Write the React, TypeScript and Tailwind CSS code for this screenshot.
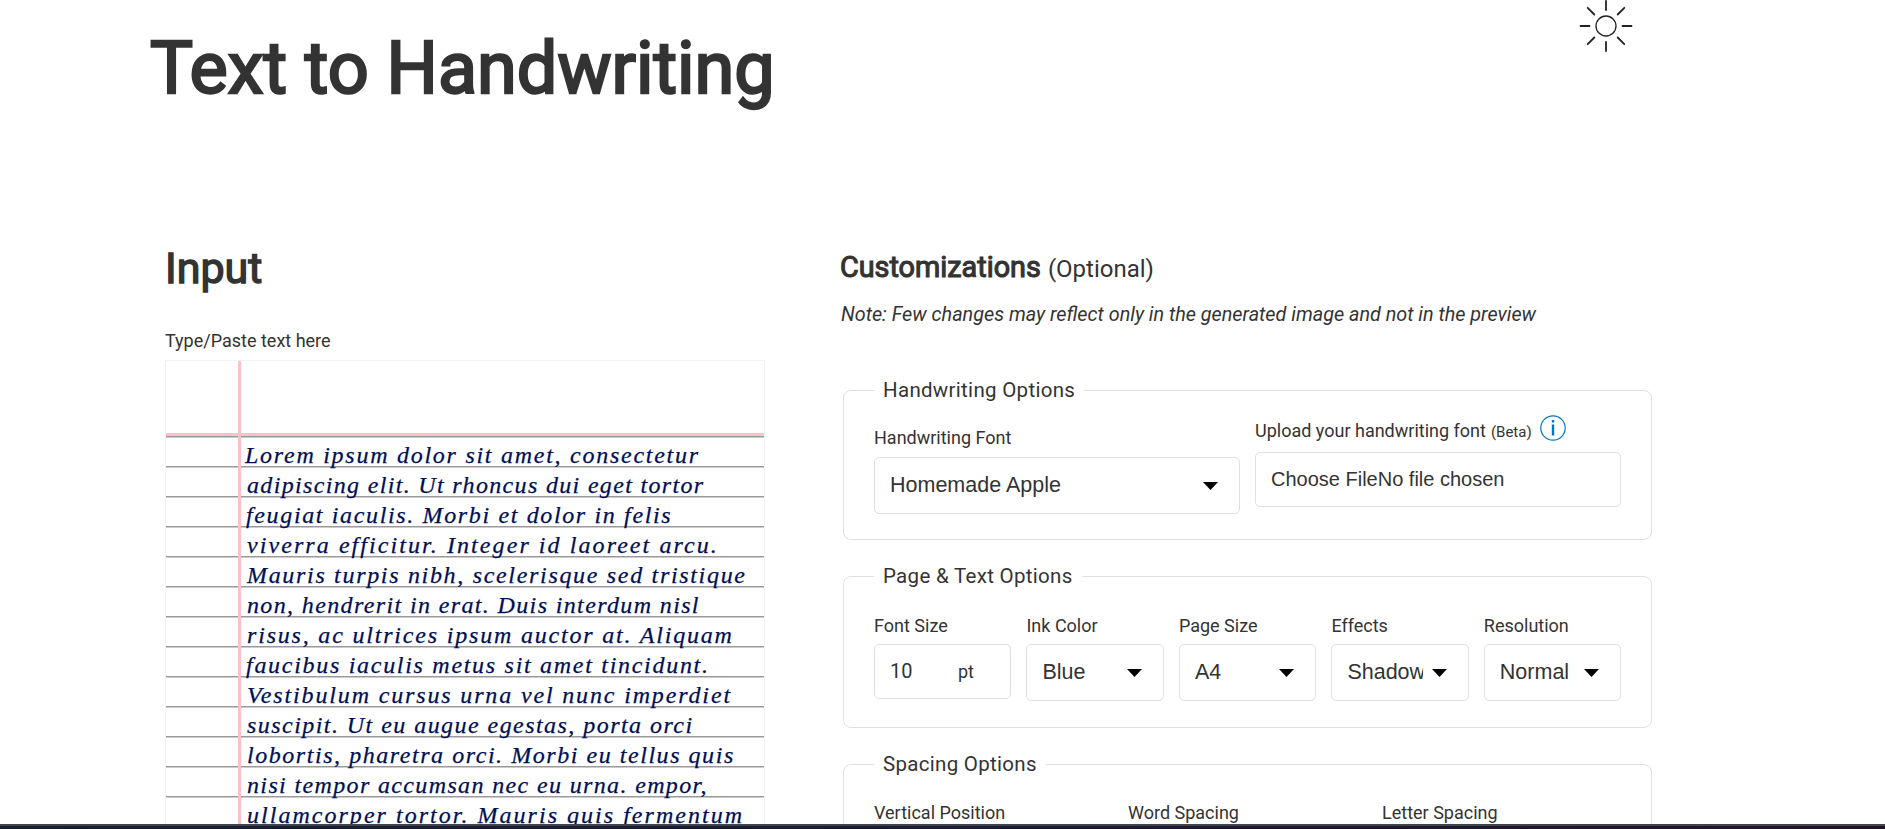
import { useLayoutEffect, useRef, useState, type ReactNode } from "react";

const noteLines: { text: string; width: number; indent: number }[] = [
  { text: "Lorem ipsum dolor sit amet, consectetur", width: 453, indent: -2 },
  { text: "adipiscing elit. Ut rhoncus dui eget tortor", width: 456, indent: 0 },
  { text: "feugiat iaculis. Morbi et dolor in felis", width: 425, indent: -1 },
  { text: "viverra efficitur. Integer id laoreet arcu.", width: 470, indent: 0 },
  { text: "Mauris turpis nibh, scelerisque sed tristique", width: 498, indent: 0 },
  { text: "non, hendrerit in erat. Duis interdum nisl", width: 452, indent: 0 },
  { text: "risus, ac ultrices ipsum auctor at. Aliquam", width: 485, indent: 0 },
  { text: "faucibus iaculis metus sit amet tincidunt.", width: 462, indent: -1 },
  { text: "Vestibulum cursus urna vel nunc imperdiet", width: 483, indent: 0 },
  { text: "suscipit. Ut eu augue egestas, porta orci", width: 445, indent: 0 },
  { text: "lobortis, pharetra orci. Morbi eu tellus quis", width: 486, indent: 0 },
  { text: "nisi tempor accumsan nec eu urna. empor,", width: 460, indent: 0 },
  { text: "ullamcorper tortor. Mauris quis fermentum", width: 495, indent: 0 },
];

function NoteLine({ text, width, indent }: { text: string; width: number; indent: number }) {
  const ref = useRef<HTMLSpanElement>(null);
  const [spacing, setSpacing] = useState(0);
  useLayoutEffect(() => {
    if (ref.current) {
      setSpacing((width - ref.current.offsetWidth) / (text.length - 1));
    }
  }, [text, width]);
  return (
    <div className="h-[30px] whitespace-nowrap" style={{ paddingLeft: indent + 2 }}>
      <span ref={ref} style={{ letterSpacing: spacing }}>
        {text}
      </span>
    </div>
  );
}

function Sun() {
  return (
    <svg width="54" height="54" viewBox="-27 -27 54 54" fill="none" stroke="#222" strokeLinecap="round">
      <circle r="10" strokeWidth="1.3" />
      <path
        strokeWidth="1.8"
        d="M0-16V-25M0 16V25M-16.5 0H-25.5M16.5 0H25.5M11.7-11.5L18.3-18.2M-11.7-11.5L-18.3-18.2M11.7 11.5L18.3 18.2M-11.7 11.5L-18.3 18.2"
      />
    </svg>
  );
}

function Group({ title, children, className }: { title: string; children: ReactNode; className: string }) {
  return (
    <fieldset className={`w-[809px] rounded-[8px] border border-[#e0e0e0] px-[30px] ${className}`}>
      <legend className="h-[30px] px-[9px] text-[20.5px] leading-[30px] tracking-[0.3px]">{title}</legend>
      {children}
    </fieldset>
  );
}

function Select({ value }: { value: string }) {
  return (
    <div className="flex h-[57px] items-center rounded-[5px] border border-[#e0e0e0] pr-[21px] pl-[15px] font-['Liberation_Sans',sans-serif] text-[21.5px]">
      <span className="min-w-0 flex-1 overflow-hidden whitespace-nowrap">{value}</span>
      <svg className="ml-[9px] shrink-0" width="15" height="8" viewBox="0 0 15 8">
        <path d="M0 0H15L7.5 8Z" fill="#000" />
      </svg>
    </div>
  );
}

function Field({ label, children }: { label: string; children?: ReactNode }) {
  return (
    <div className="min-w-0">
      <div className="h-[24px] text-[18px] leading-[24px] whitespace-nowrap">{label}</div>
      {children}
    </div>
  );
}

export default function App() {
  return (
    <div className="flex h-[829px] flex-col overflow-hidden bg-white font-[Roboto,sans-serif] text-[#333]">
      <div className="min-h-0 flex-1 overflow-hidden">
        <header className="flex h-[240px] items-start justify-between pr-[252px] pl-[150px]">
          <h1 className="pt-[24px] text-[72px] leading-[90px] whitespace-nowrap [-webkit-text-stroke:2.4px_#333]">
            Text to Handwriting
          </h1>
          <div className="-mt-[1px]">
            <Sun />
          </div>
        </header>
        <main className="flex items-start pl-[165px]">
          <section className="w-[600px]">
            <h2 className="h-[88px] pt-[2px] text-[43px] leading-[52px] [-webkit-text-stroke:1.4px_#333]">Input</h2>
            <div className="h-[32px] text-[18px] leading-[26px]">Type/Paste text here</div>
            <div className="relative h-[600px] border border-[#f3f3f3]">
              <div className="h-[75px] border-b-[3px] border-[pink]" />
              <div className="h-[520px] bg-[repeating-linear-gradient(#999_0px,#999_1px,#ccc_1px,#ccc_2px,#fff_2px,#fff_30px)] pt-[4px] pl-[79px] font-['Liberation_Serif',serif] text-[24px] leading-[30px] text-[#000f55] italic [-webkit-text-stroke:0.25px_#000f55]">
                {noteLines.map((l) => (
                  <NoteLine key={l.text} {...l} />
                ))}
              </div>
              <div className="absolute top-0 left-[72px] h-full w-[3px] bg-[pink]" />
            </div>
          </section>
          <section className="ml-[75px] w-[812px]">
            <h2 className="flex h-[52px] items-baseline pt-[10px] text-[28.8px] leading-[35px]">
              <span className="[-webkit-text-stroke:1.1px_#333]">Customizations</span>
              <span className="ml-[7px] text-[24px]">(Optional)</span>
            </h2>
            <p className="h-[83px] pt-[10px] pl-[1px] text-[19.8px] leading-[26px] whitespace-nowrap italic">
              Note: Few changes may reflect only in the generated image and not in the preview
            </p>
            <div className="pl-[3px]">
              <Group title="Handwriting Options" className="h-[165px]">
                <div className="grid grid-cols-2 gap-[15px]">
                  <div className="pt-[21px]">
                    <Field label="Handwriting Font">
                      <div className="pt-[7px]">
                        <Select value="Homemade Apple" />
                      </div>
                    </Field>
                  </div>
                  <div className="pt-[10px]">
                    <div className="mb-[6px] flex h-[31px] items-baseline text-[18px] leading-[31px] whitespace-nowrap">
                      Upload your handwriting font
                      <span className="ml-[5px] text-[15px]">(Beta)</span>
                      <svg className="ml-[8px] self-start" width="26" height="26" viewBox="0 0 26 26">
                        <circle cx="13" cy="13" r="12.2" fill="none" stroke="#0277bd" strokeWidth="1.2" />
                        <path d="M13 9.5V20.5M13 5V7.5" stroke="#0277bd" strokeWidth="2.4" />
                      </svg>
                    </div>
                    <div className="h-[55px] rounded-[5px] border border-[#e0e0e0] pl-[15px] font-['Liberation_Sans',sans-serif] text-[20px] leading-[53px]">
                      Choose FileNo file chosen
                    </div>
                  </div>
                </div>
              </Group>
              <Group title="Page & Text Options" className="mt-[21px] h-[167px]">
                <div className="grid grid-cols-5 gap-[15.3px] pt-[23px]">
                  <Field label="Font Size">
                    <div className="mt-[6px] flex h-[55px] items-baseline rounded-[5px] border border-[#e0e0e0] pl-[15px] text-[20px] leading-[53px]">
                      <span className="w-[68px]">10</span>
                      <span className="text-[18px]">pt</span>
                    </div>
                  </Field>
                  {[
                    ["Ink Color", "Blue"],
                    ["Page Size", "A4"],
                    ["Effects", "Shadows"],
                    ["Resolution", "Normal"],
                  ].map(([label, value]) => (
                    <Field key={label} label={label}>
                      <div className="pt-[6px]">
                        <Select value={value} />
                      </div>
                    </Field>
                  ))}
                </div>
              </Group>
              <Group title="Spacing Options" className="mt-[21px] h-[166px]">
                <div className="grid grid-cols-3 gap-[15px] pt-[22px]">
                  <Field label="Vertical Position" />
                  <Field label="Word Spacing" />
                  <Field label="Letter Spacing" />
                </div>
              </Group>
            </div>
          </section>
        </main>
      </div>
      <div className="h-[5px] shrink-0 border-t-2 border-[#40444c] bg-linear-to-r from-[#16202f] via-[#1d1b36] to-[#20162a]" />
    </div>
  );
}
